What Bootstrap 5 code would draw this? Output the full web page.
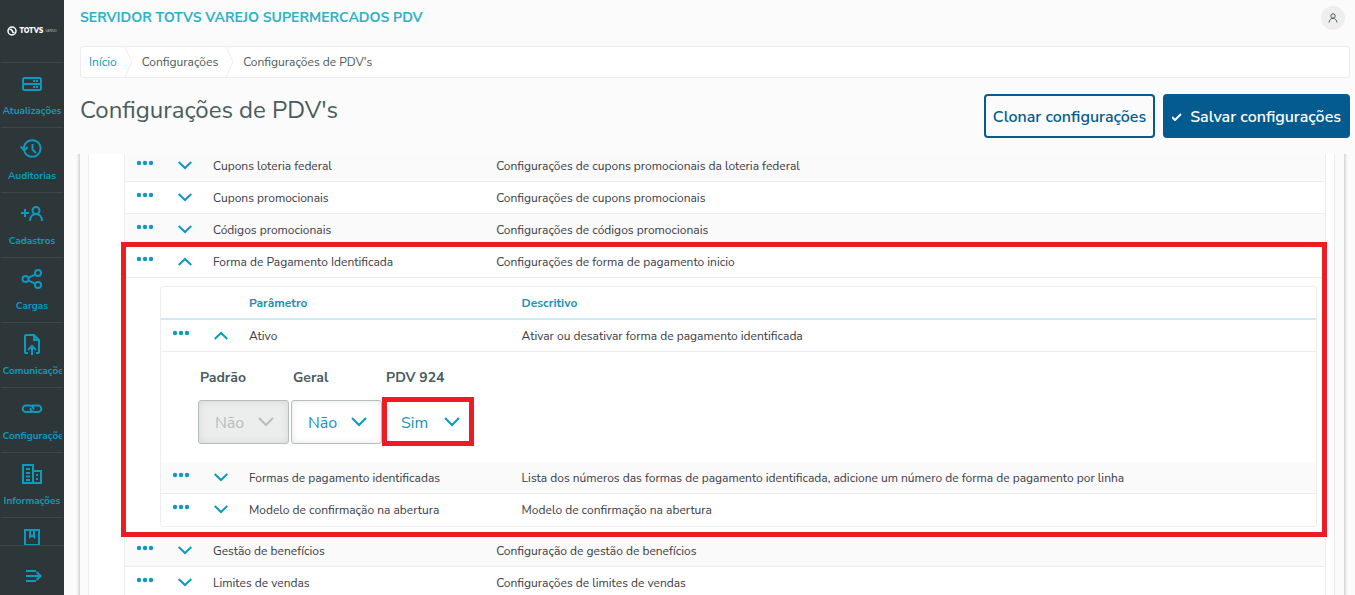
<!DOCTYPE html>
<html lang="pt-BR">
<head>
<meta charset="utf-8">
<meta name="viewport" content="width=device-width, initial-scale=1">
<title>Configurações de PDV's</title>
<link href="https://cdn.jsdelivr.net/npm/bootstrap@5.3.0/dist/css/bootstrap.min.css" rel="stylesheet">
<style>
  :root { --accent: #0c9abe; --navy: #045b8f; --ink: #4a5c60; --line: #eceded; }
  body { font-family: "Nunito Sans", Lato, "Open Sans", sans-serif; font-size: 12px; color: #3b3b48; background: #fbfbfb; }
  a { color: var(--accent); text-decoration: none; }
  svg { display: block; fill: none; stroke: currentColor; stroke-width: 2; }

  .side { width: 64px; background: #2d3639; color: var(--accent); }
  .brand { height: 62px; color: #fff; gap: 2px; }
  .brand b { font-size: 7px; font-weight: 900; }
  .brand i { font-size: 3px; color: #c5cacb; }
  .side-link { height: 65px; margin: 0 1px; border-top: 1px solid #3c4649; padding: 9px 2px 0; font-size: 10px; font-weight: 700; }
  .side-link span { line-height: 16px; margin-top: 7px; max-width: 59px; overflow: hidden; white-space: nowrap; }
  .side-toggle { height: 50px; border: 0; border-top: 1px solid #3c4649; background: none; color: var(--accent); padding: 10px 0 0 4px; }

  .main-head { padding-right: 5px; }
  .server { font-size: 14px; line-height: 36px; font-weight: 700; color: #2cb2c6; }
  .avatar { width: 24px; height: 24px; margin-right: 5px; background: #eee; color: #4a5c60; border: 0; }
  .crumbs { height: 32px; margin-top: 10px; padding: 0 8px; background: #fff; border: 1px solid var(--line); border-radius: 3px; line-height: 20px; color: var(--ink); }
  .crumbs svg { stroke: var(--line); stroke-width: 1; margin: 0 8px; }
  .page-title { font-size: 24px; line-height: 32px; font-weight: 400; color: var(--ink); }
  .action { height: 44px; border: 2px solid var(--navy); border-radius: 4px; padding: 2px 7px 0; font-size: 16px; font-weight: 600; color: var(--navy); }
  .action-main { background: var(--navy); color: #fff; }

  .scroll-view { margin: 16px 0 0 -16px; padding: 0 11px 0 16px; }
  .sheet { margin-top: -4px; padding: 0 9px 0 8px; box-shadow: 0 0 3px 1px #c4c4c4; }
  .sheet-inner { padding: 0 8px 40px 35px; background: #fff; border: solid var(--line); border-width: 0 1px; }
  .grid { width: 100%; table-layout: fixed; border-collapse: separate; border-spacing: 0; border: 1px solid var(--line); }
  .grid td, .grid th { height: 32px; padding: 0 8px; border-bottom: 1px solid var(--line); line-height: 20px; }
  .grid .striped td { background: #fafafa; }
  .grid .icon-cell { padding: 0; width: 40px; }
  .grid .icon-cell button { display: block; width: 40px; height: 31px; border: 0; padding: 0; background: none; color: var(--accent); }
  .grid .icon-cell svg { margin: 0 auto 1px; }
  .grid .more svg { margin-bottom: 6px; fill: currentColor; stroke: none; }
  .name-col { width: 23.6%; }
  .outer { border-width: 0 1px; }
  .outer .detail { padding: 8px 8px 8px 35px; border-bottom: 0; }
  .inner { border-radius: 3px; }
  .inner th { border-bottom: 2px solid #cdebf3; height: 33px; font-weight: 700; color: #1b93b8; }
  .inner .fields { height: 110px; padding: 0 37px; border-bottom: 0; vertical-align: top; }
  .inner tr:last-child td { border-bottom: 0; }

  .highlight { position: relative; }
  .highlight::after { content: ""; position: absolute; inset: -4px -2px -2px -4px; border: 5px solid #ed1c24; pointer-events: none; }
  .fields-row { gap: 2px; }
  .field { position: relative; }
  .field label { font-size: 14px; line-height: 20px; padding-left: 2px; margin: 16px 0 12px; font-weight: 700; color: var(--ink); }
  .pick { width: 91px; height: 44px; padding: 2px 32px 0 16px; border: 1px solid #b6bdbf; border-radius: 3px; appearance: none; font-size: 16px; color: #1b93b8; box-shadow: inset 0 0 6px #e4e4e4;
    background: #fff url("data:image/svg+xml,%3Csvg xmlns='http://www.w3.org/2000/svg' width='16' height='10' fill='none' stroke='%230c9abe' stroke-width='2'%3E%3Cpath d='M1 1l7 7 7-7'/%3E%3C/svg%3E") no-repeat right 14px center; }
  .pick:disabled { color: #b6bdbf; opacity: 1; background-color: #eceeee; box-shadow: inset 0 0 8px #d5d8d8;
    background-image: url("data:image/svg+xml,%3Csvg xmlns='http://www.w3.org/2000/svg' width='16' height='10' fill='none' stroke='%23b6bdbf' stroke-width='2'%3E%3Cpath d='M1 1l7 7 7-7'/%3E%3C/svg%3E"); }
  .field-marked .pick { border-color: transparent; box-shadow: none; }
  .field-marked::after { content: ""; position: absolute; inset: 45px 1px -2px -2px; border: 5px solid #ed1c24; pointer-events: none; }
</style>
</head>
<body class="d-flex vh-100 overflow-hidden">

<svg width="0" height="0" class="position-absolute" aria-hidden="true">
  <symbol id="dots" viewBox="0 0 18 6"><circle cx="3" cy="3" r="2.2"/><circle cx="9" cy="3" r="2.2"/><circle cx="15" cy="3" r="2.2"/></symbol>
  <symbol id="down" viewBox="0 0 14 9"><path d="M.7 1l6.300 6 6.300-6"/></symbol>
  <symbol id="up" viewBox="0 0 14 9"><path d="M.7 8l6.300-6 6.300 6"/></symbol>
</svg>

<aside class="side d-flex flex-column flex-shrink-0">
  <div class="brand d-flex align-items-center justify-content-center flex-shrink-0">
    <svg width="10" height="10" viewBox="0 0 10 10"><circle cx="5" cy="5" r="4" stroke-width="1.500"/><path d="M2.500 3.500h2l1.500 3h1.500" stroke-width="1.600"/></svg>
    <b>TOTVS</b><i>VAREJO</i>
  </div>
  <nav class="flex-fill overflow-hidden">
    <a href="#" class="side-link d-flex flex-column align-items-center"><svg width="24" height="24"><rect x="3" y="6" width="18" height="6" rx="1.500"/><rect x="3" y="12" width="18" height="6" rx="1.500"/><path d="M13 9h2m1 0h2m-5 6h2m1 0h2"/></svg><span>Atualizações</span></a>
    <a href="#" class="side-link d-flex flex-column align-items-center"><svg width="24" height="24"><path d="M4.500 14.500a8.300 8.300 0 1 0-.5-4V13M.7 9.500l3.500 4 3.500-3.500M12.500 7v5.500l3.500 3.500"/></svg><span>Auditorias</span></a>
    <a href="#" class="side-link d-flex flex-column align-items-center"><svg width="24" height="24"><path d="M1 11h8M5 7v8"/><circle cx="16" cy="8.500" r="3.500"/><path d="M10 19c0-4 2.500-7 6-7s6 3 6 7"/></svg><span>Cadastros</span></a>
    <a href="#" class="side-link d-flex flex-column align-items-center"><svg width="24" height="24"><circle cx="5.500" cy="12" r="3"/><circle cx="18" cy="6" r="3"/><circle cx="18" cy="18" r="3"/><path d="M8.300 10.800l7-3.500m-7 6l7 3.500"/></svg><span>Cargas</span></a>
    <a href="#" class="side-link d-flex flex-column align-items-center"><svg width="24" height="24"><path d="M8 21H5.500Q5 21 5 20V4Q5 3 6 3h8l5 5v12q0 1-1 1h-2M14 3v5h5M12 23v-9m-4 4l4-4 4 4"/></svg><span>Comunicações</span></a>
    <a href="#" class="side-link d-flex flex-column align-items-center"><svg width="24" height="24"><path d="M12 15H6a3.300 3.300 0 0 1 0-6.600h4a3.300 3.300 0 0 1 3.300 4.200M12 8.400h6a3.300 3.300 0 0 1 0 6.600h-4a3.300 3.300 0 0 1-3.300-4.200"/></svg><span>Configurações</span></a>
    <a href="#" class="side-link d-flex flex-column align-items-center"><svg width="24" height="24"><path d="M3 3h10v18H3zM13 9h8v12h-8M6 7h4m-4 4h4m-4 3.500h4M6 18h4m6-5h2m-2 4h2"/></svg><span>Informações</span></a>
    <a href="#" class="side-link d-flex flex-column align-items-center" aria-label="Documentação"><svg width="24" height="24"><path d="M5 3h14v15H5zM10 3v7l2-1.500L14 10V3"/></svg></a>
  </nav>
  <button class="side-toggle d-flex flex-shrink-0 justify-content-center align-items-center" aria-label="Expandir menu"><svg width="18" height="14"><path d="M1 2h10M1 7h15M1 12h10M11.500 3l4 4-4 4"/></svg></button>
</aside>

<main class="flex-fill d-flex flex-column ps-3 overflow-hidden">
  <div class="main-head">
    <header class="d-flex justify-content-between align-items-center">
      <div class="server">SERVIDOR TOTVS VAREJO SUPERMERCADOS PDV</div>
      <button class="avatar rounded-circle d-flex align-items-center justify-content-center p-0" aria-label="Perfil"><svg width="12" height="12"><g stroke-width="1"><circle cx="6" cy="4" r="2.200"/><path d="M2 10.500C2.300 8 4 6.300 6 6.300S9.700 8 10 10.500"/></g></svg></button>
    </header>
    <nav aria-label="Navegação">
      <ol class="crumbs list-unstyled d-flex align-items-center mb-0">
        <li><a href="#">Início</a></li>
        <li class="d-flex align-items-center"><svg width="9" height="30"><path d="M0 0l7 15L0 30"/></svg>Configurações</li>
        <li class="d-flex align-items-center"><svg width="9" height="30"><path d="M0 0l7 15L0 30"/></svg>Configurações de PDV's</li>
      </ol>
    </nav>
    <div class="d-flex justify-content-between align-items-start mt-3">
      <h1 class="page-title mb-0">Configurações de PDV's</h1>
      <div class="d-flex gap-2">
        <button class="btn action">Clonar configurações</button>
        <button class="btn action action-main d-flex align-items-center gap-2"><svg width="10" height="8"><path d="M0 4l3 3 6-6"/></svg>Salvar configurações</button>
      </div>
    </div>
  </div>

  <div class="scroll-view flex-fill overflow-hidden">
    <div class="sheet"><div class="sheet-inner">
      <table class="grid outer">
        <colgroup><col style="width:40px"><col style="width:40px"><col class="name-col"><col></colgroup>
        <tbody>
          <tr class="striped"><td class="icon-cell more"><button aria-label="Ações"><svg width="18" height="6"><use href="#dots"/></svg></button></td><td class="icon-cell"><button aria-label="Expandir"><svg width="14" height="9"><use href="#down"/></svg></button></td><td>Cupons loteria federal</td><td>Configurações de cupons promocionais da loteria federal</td></tr>
          <tr><td class="icon-cell more"><button aria-label="Ações"><svg width="18" height="6"><use href="#dots"/></svg></button></td><td class="icon-cell"><button aria-label="Expandir"><svg width="14" height="9"><use href="#down"/></svg></button></td><td>Cupons promocionais</td><td>Configurações de cupons promocionais</td></tr>
          <tr class="striped"><td class="icon-cell more"><button aria-label="Ações"><svg width="18" height="6"><use href="#dots"/></svg></button></td><td class="icon-cell"><button aria-label="Expandir"><svg width="14" height="9"><use href="#down"/></svg></button></td><td>Códigos promocionais</td><td>Configurações de códigos promocionais</td></tr>
        </tbody>
        <tbody class="highlight">
          <tr><td class="icon-cell more"><button aria-label="Ações"><svg width="18" height="6"><use href="#dots"/></svg></button></td><td class="icon-cell"><button aria-label="Recolher"><svg width="14" height="9"><use href="#up"/></svg></button></td><td>Forma de Pagamento Identificada</td><td>Configurações de forma de pagamento inicio</td></tr>
          <tr><td colspan="4" class="detail">
            <table class="grid inner">
              <colgroup><col style="width:40px"><col style="width:40px"><col class="name-col"><col></colgroup>
              <thead><tr><th></th><th></th><th>Parâmetro</th><th>Descritivo</th></tr></thead>
              <tbody>
                <tr><td class="icon-cell more"><button aria-label="Ações"><svg width="18" height="6"><use href="#dots"/></svg></button></td><td class="icon-cell"><button aria-label="Recolher"><svg width="14" height="9"><use href="#up"/></svg></button></td><td>Ativo</td><td>Ativar ou desativar forma de pagamento identificada</td></tr>
                <tr><td colspan="4" class="fields">
                  <div class="fields-row d-flex">
                    <div class="field"><label class="d-block" for="f1">Padrão</label><select id="f1" class="pick d-block" disabled><option>Não</option><option>Sim</option></select></div>
                    <div class="field"><label class="d-block" for="f2">Geral</label><select id="f2" class="pick d-block"><option>Não</option><option>Sim</option></select></div>
                    <div class="field field-marked"><label class="d-block" for="f3">PDV 924</label><select id="f3" class="pick d-block"><option>Sim</option><option>Não</option></select></div>
                  </div>
                </td></tr>
                <tr class="striped"><td class="icon-cell more"><button aria-label="Ações"><svg width="18" height="6"><use href="#dots"/></svg></button></td><td class="icon-cell"><button aria-label="Expandir"><svg width="14" height="9"><use href="#down"/></svg></button></td><td>Formas de pagamento identificadas</td><td>Lista dos números das formas de pagamento identificada, adicione um número de forma de pagamento por linha</td></tr>
                <tr><td class="icon-cell more"><button aria-label="Ações"><svg width="18" height="6"><use href="#dots"/></svg></button></td><td class="icon-cell"><button aria-label="Expandir"><svg width="14" height="9"><use href="#down"/></svg></button></td><td>Modelo de confirmação na abertura</td><td>Modelo de confirmação na abertura</td></tr>
              </tbody>
            </table>
          </td></tr>
        </tbody>
        <tbody>
          <tr class="striped"><td class="icon-cell more"><button aria-label="Ações"><svg width="18" height="6"><use href="#dots"/></svg></button></td><td class="icon-cell"><button aria-label="Expandir"><svg width="14" height="9"><use href="#down"/></svg></button></td><td>Gestão de benefícios</td><td>Configuração de gestão de benefícios</td></tr>
          <tr><td class="icon-cell more"><button aria-label="Ações"><svg width="18" height="6"><use href="#dots"/></svg></button></td><td class="icon-cell"><button aria-label="Expandir"><svg width="14" height="9"><use href="#down"/></svg></button></td><td>Limites de vendas</td><td>Configurações de limites de vendas</td></tr>
        </tbody>
      </table>
    </div></div>
  </div>
</main>
<script src="https://cdn.jsdelivr.net/npm/bootstrap@5.3.0/dist/js/bootstrap.bundle.min.js"></script>
</body>
</html>
